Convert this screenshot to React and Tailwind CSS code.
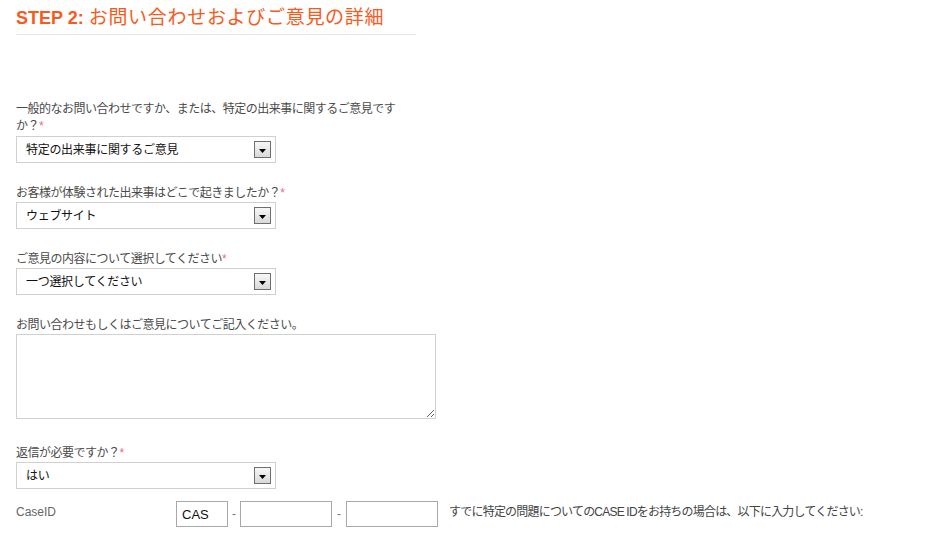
import React from "react";

const FONT = { fontFamily: '"Liberation Sans", "Noto Sans CJK JP", sans-serif' };

function Req() {
  return <span className="text-[#e0707a]">*</span>;
}

function FakeSelect({ value }) {
  return (
    <div className="mt-[1px] w-[260px] h-[27px] border border-[#d0d0d0] bg-white flex items-center justify-between pl-[9px] pr-[4px]">
      <span className="text-[12px] text-[#111] leading-none tracking-[-0.3px]">{value}</span>
      <div className="w-[17px] h-[17px] border border-[#6f6f6f] bg-gradient-to-b from-[#f7f7f7] to-[#d9d9d9] flex items-center justify-center">
        <svg width="7" height="4" viewBox="0 0 7 4" className="mt-[2px]">
          <path d="M0 0H7L3.5 4Z" fill="#000" />
        </svg>
      </div>
    </div>
  );
}

function Label({ children, className = "" }) {
  return (
    <div className={"w-[400px] text-[12px] text-[#4a4a4a] tracking-[-0.5px] " + className}>
      {children}
    </div>
  );
}

export default function App() {
  return (
    <div className="w-[941px] h-[535px] bg-white overflow-hidden" style={FONT}>
      <div className="pl-4">
        <div className="w-[400px] h-[35px] pt-[4px] border-b border-[#e4e4e4] text-[#f85a1c] whitespace-nowrap leading-[23px]">
          <span className="font-bold text-[18px]">STEP 2:</span>
          <span
            className="text-[19px] ml-[5px] tracking-[0.7px]"
            style={{ fontFamily: '"Noto Sans CJK JP", sans-serif' }}
          >
            お問い合わせおよびご意見の詳細
          </span>
        </div>
      </div>

      <div className="pl-4 pt-[66px] flex flex-col">
        <div className="flex flex-col">
          <Label className="leading-[17px]">
            一般的なお問い合わせですか、または、特定の出来事に関するご意見です
            <br />
            か？<Req />
          </Label>
          <FakeSelect value="特定の出来事に関するご意見" />
        </div>

        <div className="flex flex-col mt-[22px]">
          <Label className="leading-[16px]">
            お客様が体験された出来事はどこで起きましたか？<Req />
          </Label>
          <FakeSelect value="ウェブサイト" />
        </div>

        <div className="flex flex-col mt-[22px]">
          <Label className="leading-[16px]">
            ご意見の内容について選択してください<Req />
          </Label>
          <FakeSelect value="一つ選択してください" />
        </div>

        <div className="flex flex-col mt-[22px]">
          <Label className="leading-[16px]">お問い合わせもしくはご意見についてご記入ください。</Label>
          <textarea
            className="block mt-[1px] w-[420px] h-[85px] border border-[#d0d0d0] bg-white outline-none"
            defaultValue=""
          />
        </div>

        <div className="flex flex-col mt-[26px]">
          <Label className="leading-[16px]">
            返信が必要ですか？<Req />
          </Label>
          <FakeSelect value="はい" />
        </div>

        <div className="flex items-start mt-[12px]">
          <div className="w-[160px] pt-[3px] text-[12px] leading-[16px] text-[#666]">CaseID</div>
          <div className="flex items-center">
            <input
              className="w-[52px] h-[26px] border border-[#a8a8a8] px-[5px] text-[13px] text-[#111] outline-none"
              defaultValue="CAS"
              style={FONT}
            />
            <span className="mx-[4px] text-[12px] text-[#777]">-</span>
            <input className="w-[92px] h-[26px] border border-[#a8a8a8] outline-none" defaultValue="" />
            <span className="mx-[5px] text-[12px] text-[#777]">-</span>
            <input className="w-[92px] h-[26px] border border-[#a8a8a8] outline-none" defaultValue="" />
          </div>
          <div className="ml-[11px] pt-[3px] text-[12px] leading-[16px] text-[#444] whitespace-nowrap tracking-[-0.8px]">
            すでに特定の問題についてのCASE IDをお持ちの場合は、以下に入力してください:
          </div>
        </div>
      </div>
    </div>
  );
}
